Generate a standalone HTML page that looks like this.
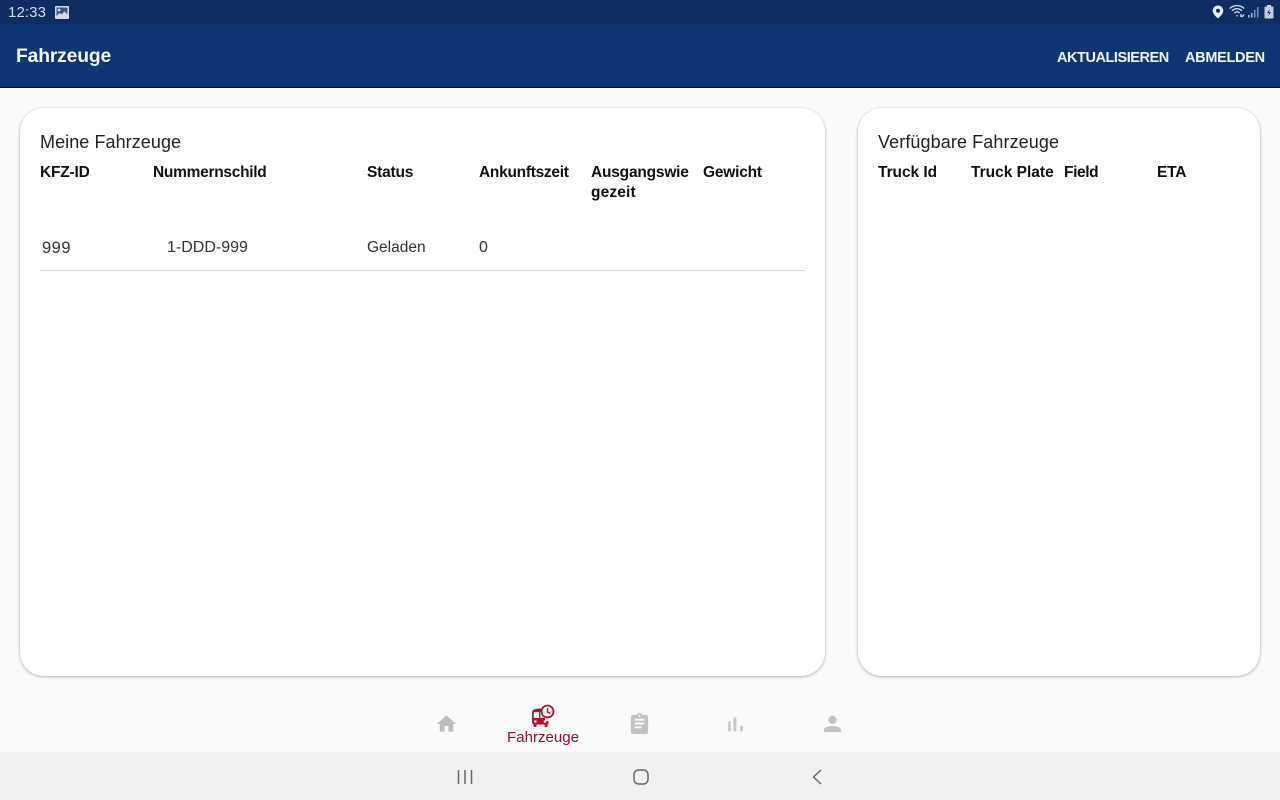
<!DOCTYPE html>
<html lang="de">
<head>
<meta charset="utf-8">
<title>Fahrzeuge</title>
<style>
html,body{margin:0;padding:0;width:1280px;height:800px;overflow:hidden;background:#fafafa;font-family:"Liberation Sans",sans-serif;}
#root{position:relative;width:1280px;height:800px;overflow:hidden;background:#fafafa;}
.t{position:absolute;white-space:nowrap;line-height:20px;}
.b{font-weight:bold;font-size:15.5px;color:#111;letter-spacing:-.2px;}
.r{font-size:15.5px;color:#333;}
.h{font-size:18px;color:#222;line-height:24px;}
.card{position:absolute;background:#fff;border-radius:24px;box-shadow:0 1px 3px rgba(0,0,0,.28),0 0 1px rgba(0,0,0,.12);}
svg{position:absolute;display:block;}
</style>
</head>
<body>
<div id="root">
  <div style="position:absolute;left:0;top:0;width:1280px;height:24px;background:#0f2c63;"></div>
  <div style="position:absolute;left:0;top:24px;width:1280px;height:63px;background:#103574;"></div>
  <div style="position:absolute;left:0;top:87px;width:1280px;height:1px;background:#111;"></div>

  <div class="t" style="left:8px;top:3px;font-size:15px;color:#d3dcec;letter-spacing:.1px;">12:33</div>
  <svg style="left:55px;top:6px" width="14" height="13" viewBox="0 0 14 13"><rect width="14" height="13" rx="1" fill="#d3dcec"/><rect x="1.5" y="1.5" width="11" height="10" fill="#3d5685"/><circle cx="4" cy="4" r="1.4" fill="#d3dcec"/><path d="M1.5 10l3-3 2 1.5 3-3 3 3v3h-11z" fill="#d3dcec"/></svg>

  <svg style="left:1212px;top:5px" width="12" height="14" viewBox="0 0 12 14"><path fill-rule="evenodd" d="M6 .5A5.300 5.300 0 0 0 .7 5.800C.7 9.300 6 13.500 6 13.500s5.300-4.200 5.300-7.700A5.300 5.300 0 0 0 6 .5zm0 3.300a2 2 0 1 1 0 4 2 2 0 0 1 0-4z" fill="#e6ebf4"/></svg>
  <svg style="left:1229px;top:4px" width="17" height="14" viewBox="0 0 17 14" fill="none" stroke="#d5dcea" stroke-width="1.300"><path d="M.8 4.500C5 .6 11 .6 15.200 4.500"/><path d="M3 6.800C6 4 10 4 13 6.800"/><path d="M5.200 9C7 7.500 9 7.500 10.800 9"/><path d="M8 11v1.500M12 10v3M15 10.500l-2 2.500" stroke-width="1.400"/></svg>
  <svg style="left:1247px;top:6px" width="12" height="12" viewBox="0 0 12 12" fill="#b9c5da"><rect x="1" y="9" width="1.500" height="2.500"/><rect x="4" y="7" width="1.500" height="4.500"/><rect x="7" y="4" width="1.500" height="7.500" fill="#7f92b5"/><rect x="10" y="1" width="1.500" height="10.500" fill="#7f92b5"/></svg>
  <svg style="left:1263.500px;top:5px" width="10" height="14" viewBox="0 0 10 14"><rect x="3" y="0" width="4" height="2" fill="#c9d2e3"/><rect x=".5" y="1.500" width="9" height="12" rx="1" fill="#c4cede"/><path d="M5.800 4L3 8h2l-.8 3L7 7H5z" fill="#16305f"/></svg>

  <div class="t" style="left:16px;top:47px;font-size:19.300px;font-weight:bold;color:#f4f7fb;letter-spacing:-.15px;">Fahrzeuge</div>
  <div class="t" style="left:1057px;top:48px;font-size:14.500px;font-weight:bold;color:#f0f3f9;letter-spacing:-.45px;">AKTUALISIEREN</div>
  <div class="t" style="left:1185px;top:48px;font-size:14.500px;font-weight:bold;color:#f0f3f9;letter-spacing:-.3px;">ABMELDEN</div>

  <div class="card" style="left:20px;top:108px;width:805px;height:568px;"></div>
  <div class="card" style="left:857.500px;top:108px;width:402.500px;height:568px;"></div>

  <div class="t h" style="left:40px;top:130px;letter-spacing:.07px;">Meine Fahrzeuge</div>
  <div class="t b" style="left:40px;top:163px;">KFZ-ID</div>
  <div class="t b" style="left:153px;top:163px;letter-spacing:-.28px;">Nummernschild</div>
  <div class="t b" style="left:367px;top:163px;">Status</div>
  <div class="t b" style="left:479px;top:163px;letter-spacing:-.28px;">Ankunftszeit</div>
  <div class="t b" style="left:591px;top:163px;">Ausgangswie<br><span style="letter-spacing:.15px;">gezeit</span></div>
  <div class="t b" style="left:703px;top:163px;">Gewicht</div>
  <div class="t r" style="left:42px;top:238px;font-size:16.500px;letter-spacing:.5px;">999</div>
  <div class="t r" style="left:167px;top:238px;font-size:16px;">1-DDD-999</div>
  <div class="t r" style="left:367px;top:238px;">Geladen</div>
  <div class="t r" style="left:479px;top:238px;font-size:16px;">0</div>
  <div style="position:absolute;left:40px;top:270px;width:765px;height:1px;background:#d8d8d8;"></div>

  <div class="t h" style="left:878px;top:130px;letter-spacing:.1px;">Verfügbare Fahrzeuge</div>
  <div class="t b" style="left:878px;top:163px;letter-spacing:-.05px;">Truck Id</div>
  <div class="t b" style="left:971px;top:163px;letter-spacing:0;">Truck Plate</div>
  <div class="t b" style="left:1064px;top:163px;letter-spacing:-.4px;">Field</div>
  <div class="t b" style="left:1157px;top:163px;">ETA</div>

  <svg style="left:435px;top:712px" width="23" height="23" viewBox="0 0 24 24"><path d="M10 20.500v-6h4v6h5v-8h3L12 3.500 2 12.500h3v8z" fill="#bdbdbd"/></svg>
  <svg style="left:530px;top:704px" width="26" height="24" viewBox="0 0 26 24"><path d="M2 8.500C2 6 4 4.500 11 4.500h4V17h3.500v2.500c0 .6-.4 1-1 1v1.500a1 1 0 0 1-1 1h-1a1 1 0 0 1-1-1v-1.500H6.500v1.500a1 1 0 0 1-1 1h-1a1 1 0 0 1-1-1v-1.500c-.8-.5-1.500-1.200-1.500-2z" fill="#b50f2b"/><rect x="3.800" y="8" width="5.200" height="6" fill="#fff"/><rect x="10.300" y="8" width="5.700" height="6" fill="#fff"/><circle cx="5.300" cy="17.500" r="1.300" fill="#fff"/><circle cx="15" cy="17.500" r="1.300" fill="#fff"/><circle cx="17.500" cy="7.500" r="6" fill="#fff" stroke="#b50f2b" stroke-width="1.800"/><path d="M17.500 4v4l3 1.500" fill="none" stroke="#b50f2b" stroke-width="1.500"/></svg>
  <div class="t" style="left:507px;top:728px;font-size:15px;color:#8f1030;letter-spacing:.04px;">Fahrzeuge</div>
  <svg style="left:628px;top:712px" width="23" height="23" viewBox="0 0 24 24"><path fill-rule="evenodd" d="M19 3h-4.200C14.400 1.800 13.300 1 12 1s-2.400.8-2.800 2H5c-1.100 0-2 .9-2 2v16c0 1.100.9 2 2 2h14c1.100 0 2-.9 2-2V5c0-1.100-.9-2-2-2zm-7 0a1 1 0 1 1 0 2 1 1 0 0 1 0-2zM7 7h10v2H7zm0 4h10v2H7zm0 4h7v2H7z" fill="#c2c2c2"/></svg>
  <svg style="left:725px;top:713px" width="22" height="22" viewBox="0 0 24 24"><path d="M3.500 9h2.800v11H3.500zM9.200 5h3.200v15H9.200zM16.500 14h3v6h-3z" fill="#c6c6c6"/></svg>
  <svg style="left:821px;top:712px" width="23" height="23" viewBox="0 0 24 24"><path d="M12 12.500a4.300 4.300 0 1 0 0-8.600 4.300 4.300 0 0 0 0 8.600zm0 2c-2.900 0-9 1.400-9 4.200V21h18v-2.300c0-2.800-6.100-4.200-9-4.200z" fill="#c2c2c2"/></svg>

  <div style="position:absolute;left:0;top:752px;width:1280px;height:48px;background:#f1f1f1;"></div>
  <svg style="left:457px;top:769px" width="16" height="16" viewBox="0 0 16 16" stroke="#666" stroke-width="1.500"><path d="M1.500 1v14M8 1v14M14.500 1v14"/></svg>
  <svg style="left:632px;top:768px" width="18" height="18" viewBox="0 0 18 18"><rect x="2" y="2" width="14" height="14" rx="4.500" fill="none" stroke="#666" stroke-width="1.500"/></svg>
  <svg style="left:809px;top:768px" width="16" height="18" viewBox="0 0 16 18"><path d="M12 2L4.500 9l7.500 7" fill="none" stroke="#666" stroke-width="1.500"/></svg>
</div>
</body>
</html>
